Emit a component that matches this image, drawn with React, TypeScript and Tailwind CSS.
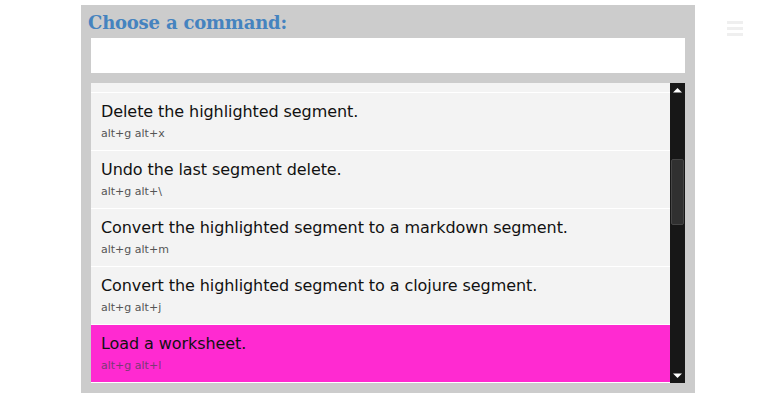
import React from "react";

const items = [
  { title: "Delete the highlighted segment.", keys: "alt+g alt+x" },
  { title: "Undo the last segment delete.", keys: "alt+g alt+\\" },
  { title: "Convert the highlighted segment to a markdown segment.", keys: "alt+g alt+m" },
  { title: "Convert the highlighted segment to a clojure segment.", keys: "alt+g alt+j" },
  { title: "Load a worksheet.", keys: "alt+g alt+l", active: true },
];

export default function App() {
  return (
    <div className="flex items-start w-[761px] h-[413px] bg-white pl-[81px] pt-[5px]" style={{ fontFamily: '"DejaVu Sans", sans-serif' }}>
      <div className="w-[614px] bg-[#cccccc] flex flex-col pb-[10px]">
        <div
          className="h-[33px] pt-[2px] pl-[7px] text-[18px] leading-[31px] font-bold text-[#4583bf] tracking-[-0.2px]"
          style={{ fontFamily: '"DejaVu Serif", serif' }}
        >
          Choose a command:
        </div>
        <div className="mx-[10px] h-[35px] bg-white" />
        <div className="mx-[10px] mt-[10px] h-[300px] flex overflow-hidden">
          <div className="flex-1 overflow-hidden flex flex-col">
            <div className="h-[10px] shrink-0 bg-[#f3f3f3] border-b border-white" />
            {items.map((it, i) => (
              <div
                key={i}
                className={`h-[58px] shrink-0 border-b border-white pl-[10px] pt-[9px] ${it.active ? "bg-[#ff2ad1]" : "bg-[#f3f3f3]"}`}
              >
                <div className="text-[16px] leading-[19px] text-[#111] whitespace-nowrap tracking-[-0.08px]">{it.title}</div>
                <div className={`mt-[6px] text-[11px] leading-[13px] ${it.active ? "text-[#7a3a74]" : "text-[#555]"}`}>
                  {it.keys}
                </div>
              </div>
            ))}
          </div>
          <div className="w-[15px] bg-[#171717] flex flex-col items-center">
            <svg width="9" height="5" viewBox="0 0 9 5" className="mt-[5px]">
              <polygon points="4.5,0 9,4.5 0,4.5" fill="#ffffff" />
            </svg>
            <div className="mt-[66px] w-[13px] h-[66px] rounded-[2px] bg-[#303030] border border-[#454545]" />
            <div className="flex-1" />
            <svg width="9" height="5" viewBox="0 0 9 5" className="mb-[5px]">
              <polygon points="0,0.5 9,0.5 4.5,5" fill="#ffffff" />
            </svg>
          </div>
        </div>
      </div>
      <div className="ml-[32px] mt-[16px] flex flex-col gap-[3px]">
        <div className="w-[16px] h-[3px] bg-[#efefef]" />
        <div className="w-[16px] h-[3px] bg-[#efefef]" />
        <div className="w-[16px] h-[3px] bg-[#efefef]" />
      </div>
    </div>
  );
}
